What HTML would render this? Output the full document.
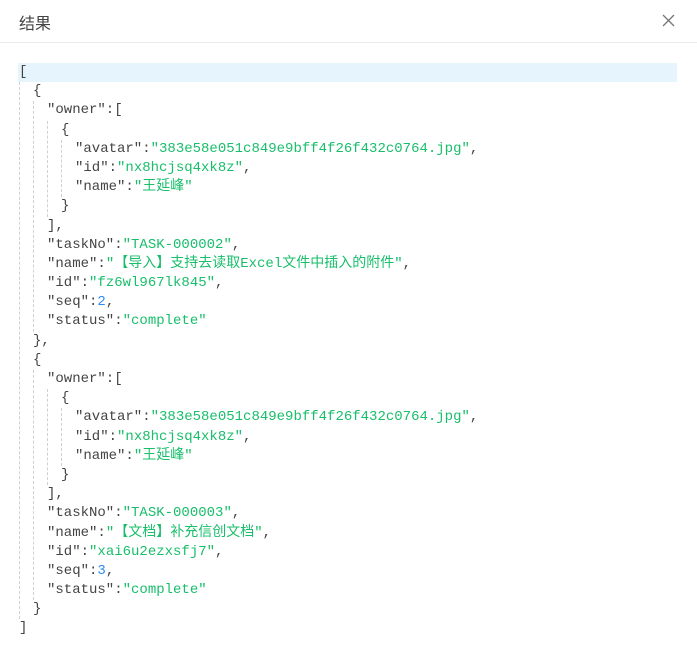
<!DOCTYPE html>
<html><head><meta charset="utf-8"><style>
body{margin:0;width:697px;height:648px;background:#fff;overflow:hidden;font-family:"Liberation Sans","Noto Sans CJK SC",sans-serif;}
.hd{position:absolute;left:0;top:0;width:697px;height:42px;border-bottom:1px solid #e8eaec;}
.hd .t{position:absolute;left:19px;top:10px;font-size:16px;color:#444;}
.hd svg{position:absolute;left:662px;top:14px;}
.code{position:absolute;left:18px;top:63px;width:659px;font-family:"Liberation Mono","Noto Sans CJK SC",monospace;font-size:14px;color:#444;}
.l{height:19.2px;line-height:19.2px;white-space:pre;padding-left:1px;}
.hl{background:#e6f4fd;}
.c{border-left:1px dashed #d0d0d0;margin-left:1px;padding-left:12px;}
.s{color:#19be6b}.n{color:#2d8cf0}
</style></head><body>
<div class="hd"><div class="t">结果</div>
<svg width="13" height="13" viewBox="0 0 13 13"><path d="M1 1L12 12M12 1L1 12" stroke="#777" stroke-width="1.3"/></svg></div>
<div class="code">
<div class="l hl">[</div>
<div class="c">
 <div class="l">{</div>
 <div class="c">
  <div class="l">"owner":[</div>
  <div class="c">
   <div class="l">{</div>
   <div class="c">
    <div class="l">"avatar":<span class="s">"383e58e051c849e9bff4f26f432c0764.jpg"</span>,</div>
    <div class="l">"id":<span class="s">"nx8hcjsq4xk8z"</span>,</div>
    <div class="l">"name":<span class="s">"王延峰"</span></div>
   </div>
   <div class="l">}</div>
  </div>
  <div class="l">],</div>
  <div class="l">"taskNo":<span class="s">"TASK-000002"</span>,</div>
  <div class="l">"name":<span class="s">"【导入】支持去读取Excel文件中插入的附件"</span>,</div>
  <div class="l">"id":<span class="s">"fz6wl967lk845"</span>,</div>
  <div class="l">"seq":<span class="n">2</span>,</div>
  <div class="l">"status":<span class="s">"complete"</span></div>
 </div>
 <div class="l">},</div>
 <div class="l">{</div>
 <div class="c">
  <div class="l">"owner":[</div>
  <div class="c">
   <div class="l">{</div>
   <div class="c">
    <div class="l">"avatar":<span class="s">"383e58e051c849e9bff4f26f432c0764.jpg"</span>,</div>
    <div class="l">"id":<span class="s">"nx8hcjsq4xk8z"</span>,</div>
    <div class="l">"name":<span class="s">"王延峰"</span></div>
   </div>
   <div class="l">}</div>
  </div>
  <div class="l">],</div>
  <div class="l">"taskNo":<span class="s">"TASK-000003"</span>,</div>
  <div class="l">"name":<span class="s">"【文档】补充信创文档"</span>,</div>
  <div class="l">"id":<span class="s">"xai6u2ezxsfj7"</span>,</div>
  <div class="l">"seq":<span class="n">3</span>,</div>
  <div class="l">"status":<span class="s">"complete"</span></div>
 </div>
 <div class="l">}</div>
</div>
<div class="l">]</div>
</div>
</body></html>
